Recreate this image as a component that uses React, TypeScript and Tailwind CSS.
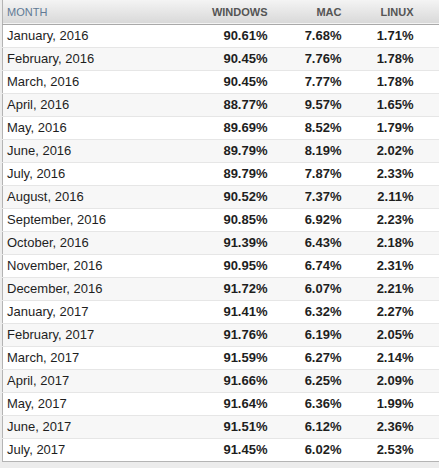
const ROWS: [string, string, string, string][] = [
  ["January, 2016", "90.61%", "7.68%", "1.71%"],
  ["February, 2016", "90.45%", "7.76%", "1.78%"],
  ["March, 2016", "90.45%", "7.77%", "1.78%"],
  ["April, 2016", "88.77%", "9.57%", "1.65%"],
  ["May, 2016", "89.69%", "8.52%", "1.79%"],
  ["June, 2016", "89.79%", "8.19%", "2.02%"],
  ["July, 2016", "89.79%", "7.87%", "2.33%"],
  ["August, 2016", "90.52%", "7.37%", "2.11%"],
  ["September, 2016", "90.85%", "6.92%", "2.23%"],
  ["October, 2016", "91.39%", "6.43%", "2.18%"],
  ["November, 2016", "90.95%", "6.74%", "2.31%"],
  ["December, 2016", "91.72%", "6.07%", "2.21%"],
  ["January, 2017", "91.41%", "6.32%", "2.27%"],
  ["February, 2017", "91.76%", "6.19%", "2.05%"],
  ["March, 2017", "91.59%", "6.27%", "2.14%"],
  ["April, 2017", "91.66%", "6.25%", "2.09%"],
  ["May, 2017", "91.64%", "6.36%", "1.99%"],
  ["June, 2017", "91.51%", "6.12%", "2.36%"],
  ["July, 2017", "91.45%", "6.02%", "2.53%"],
];

export default function App() {
  return (
    <div className="h-screen overflow-hidden bg-[#ececec] pl-[2px] font-['Liberation_Sans',Arial,sans-serif]">
      <table className="w-[437px] border-collapse border-l border-b border-[#b4b4b4] bg-white">
        <thead>
          <tr className="h-[24px] bg-gradient-to-b from-[#f4f4f4] to-[#d9d9d9] border-b border-[#a9a9a9] text-[11px]">
            <th className="w-[193px] pl-[4px] text-left font-normal text-[#617a95]">MONTH</th>
            <th className="w-[80px] pr-[8px] text-right font-bold text-[#555]">WINDOWS</th>
            <th className="w-[74px] pr-[8px] text-right font-bold text-[#555]">MAC</th>
            <th className="w-[72px] pr-[8px] text-right font-bold text-[#555]">LINUX</th>
            <th />
          </tr>
        </thead>
        <tbody>
          {ROWS.map(([month, win, mac, linux], i) => (
            <tr key={month} className={`h-[23px] border-b border-[#e6e6e6] text-[13px] text-[#1e1e1e] last:border-b-0 ${i % 2 ? "bg-[#f7f7f7]" : "bg-white"}`}>
              <td className="pl-[4px]">{month}</td>
              <td className="pr-[8px] text-right font-bold">{win}</td>
              <td className="pr-[8px] text-right font-bold">{mac}</td>
              <td className="pr-[8px] text-right font-bold">{linux}</td>
              <td />
            </tr>
          ))}
        </tbody>
      </table>
    </div>
  );
}
